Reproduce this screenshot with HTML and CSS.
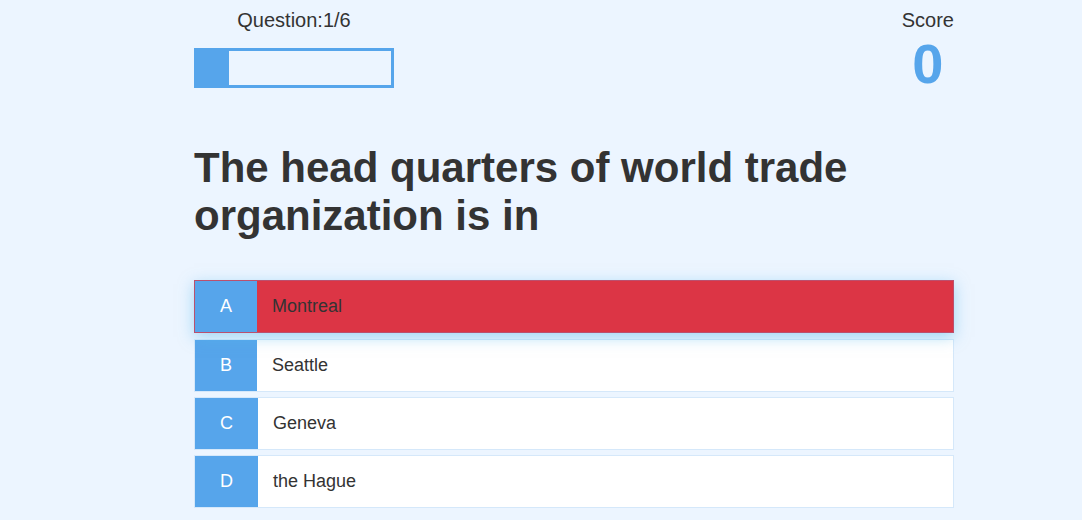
FILE: index.html
```html
<!DOCTYPE html>
<html lang="en">
<head>
<meta charset="utf-8">
<title>Quiz</title>
<link rel="stylesheet" href="styles.css">
</head>
<body>
<div class="quiz">
  <div class="hud">
    <div class="hud-item">
      <p class="hud-prefix">Question:1/6</p>
      <div class="progress-bar"><div class="progress-fill" style="width: 16.67%"></div></div>
    </div>
    <div class="hud-item">
      <p class="hud-prefix">Score</p>
      <h1 class="hud-main">0</h1>
    </div>
  </div>
  <h2 class="question">The head quarters of world trade organization is in</h2>
  <div class="choices">
    <div class="choice incorrect hovered">
      <span class="choice-prefix">A</span>
      <span class="choice-text">Montreal</span>
    </div>
    <div class="choice">
      <span class="choice-prefix">B</span>
      <span class="choice-text">Seattle</span>
    </div>
    <div class="choice">
      <span class="choice-prefix">C</span>
      <span class="choice-text">Geneva</span>
    </div>
    <div class="choice">
      <span class="choice-prefix">D</span>
      <span class="choice-text">the Hague</span>
    </div>
  </div>
</div>
</body>
</html>
```
FILE: styles.css
```css
* {
  box-sizing: border-box;
}

html, body {
  margin: 0;
  padding: 0;
}

body {
  background-color: #ecf5ff;
  color: #333;
  font-family: "Liberation Sans", Arial, sans-serif;
}

.quiz {
  width: 760px;
  margin-left: 194px;
  padding-top: 9px;
}

.hud {
  display: flex;
  justify-content: space-between;
  align-items: flex-start;
}

.hud-item {
  display: flex;
  flex-direction: column;
  align-items: center;
}

.hud-prefix {
  margin: 0;
  font-size: 20px;
  line-height: 23px;
  text-align: center;
}

.progress-bar {
  width: 200px;
  height: 40px;
  margin-top: 16px;
  border: 3px solid #56a5eb;
}

.progress-fill {
  height: 34px;
  background-color: #56a5eb;
}

.hud-main {
  margin: 4px 0 0;
  font-size: 56px;
  line-height: 1;
  font-weight: 700;
  color: #56a5eb;
  text-align: center;
}

.question {
  margin: 52px 0 41px;
  font-size: 42px;
  line-height: 48px;
  font-weight: 700;
  color: #333;
}

.choices {
  display: flex;
  flex-direction: column;
  gap: 5px;
}

.choice {
  display: flex;
  width: 100%;
  font-size: 18px;
  line-height: 21px;
  border: 1px solid rgba(86, 165, 235, 0.25);
  background-color: #fff;
}

.choice.hovered {
  box-shadow: 0 4px 14px 0 rgba(86, 185, 235, 0.5);
  transform: translateY(-1px);
}

.choice.incorrect {
  background-color: #dc3545;
}

.choice-prefix {
  padding: 15px 25px;
  background-color: #56a5eb;
  color: #fff;
}

.choice-text {
  padding: 15px;
  flex: 1;
  color: #333;
}
```
